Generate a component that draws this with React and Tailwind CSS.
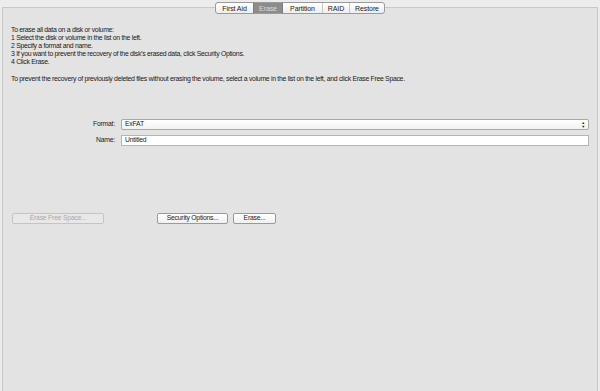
import React from 'react';

const tabs = ['First Aid', 'Erase', 'Partition', 'RAID', 'Restore'];

const MacButton = ({ children, disabled, className = '' }) => (
  <button
    className={`h-[11px] flex items-center justify-center rounded-[2px] border text-[6.8px] tracking-[-0.2px] leading-none ${
      disabled
        ? 'border-[#c4c4c4] bg-[#e8e8e8] text-[#a8a8a8]'
        : 'border-[#9a9a9a] bg-gradient-to-b from-white to-[#f0f0f0] text-[#222]'
    } ${className}`}
  >
    {children}
  </button>
);

export default function App() {
  return (
    <div
      className="w-[600px] h-[391px] bg-[#ececec] relative overflow-hidden text-[#1a1a1a]"
      style={{ fontFamily: '"Liberation Sans", Arial, sans-serif' }}
    >
      <div className="absolute left-[2px] right-[2px] top-[7px] bottom-0 border-t border-x border-[#c8c8c8] bg-[#e3e3e3]" />

      <div className="relative flex justify-center pt-[2px]">
        <div className="flex h-[12px] rounded-[3px] border border-[#9a9a9a] bg-gradient-to-b from-white to-[#eeeeee] overflow-hidden text-[7px] tracking-[-0.1px]">
          {tabs.map((t, i) => (
            <div
              key={t}
              className={`flex items-center justify-center leading-none ${
                i > 2 ? 'border-l border-[#c8c8c8]' : ''
              } ${
                t === 'Erase'
                  ? 'bg-[#8c8c8c] text-[#dcdcdc] border-x border-[#7a7a7a] w-[30px]'
                  : t === 'First Aid'
                  ? 'w-[37px]'
                  : t === 'Partition'
                  ? 'w-[39px]'
                  : t === 'RAID'
                  ? 'w-[27px]'
                  : 'w-[35px]'
              }`}
            >
              {t}
            </div>
          ))}
        </div>
      </div>

      <div className="relative px-[11px] pt-[12px] text-[6.9px] tracking-[-0.3px] leading-[8px]">
        <p>To erase all data on a disk or volume:</p>
        <p>1 Select the disk or volume in the list on the left.</p>
        <p>2 Specify a format and name.</p>
        <p>3 If you want to prevent the recovery of the disk’s erased data, click Security Options.</p>
        <p>4 Click Erase.</p>
        <p className="mt-[9px]">
          To prevent the recovery of previously deleted files without erasing the volume, select a volume in the list on the left, and click Erase Free Space.
        </p>
      </div>

      <div className="relative mt-[36px] flex flex-col gap-[5px] pl-[78px] pr-[11px] text-[6.8px] tracking-[-0.2px]">
        <div className="flex items-center">
          <span className="w-[43px] text-right pr-[6px]">Format:</span>
          <div className="flex-1 h-[11px] flex items-center justify-between rounded-[2px] border border-[#a8a8a8] bg-gradient-to-b from-white to-[#f2f2f2] pl-[3px] pr-[3px]">
            <span>ExFAT</span>
            <span className="flex flex-col items-center leading-none text-[4px] text-[#333]">
              <span>▲</span>
              <span>▼</span>
            </span>
          </div>
        </div>
        <div className="flex items-center">
          <span className="w-[43px] text-right pr-[6px]">Name:</span>
          <div className="flex-1 h-[11px] flex items-center border border-[#b4b4b4] bg-white pl-[3px]">
            Untitled
          </div>
        </div>
      </div>

      <div className="relative mt-[67px] flex items-center pl-[12px]">
        <MacButton disabled className="w-[92px]">Erase Free Space...</MacButton>
        <MacButton className="w-[71px] ml-[53px]">Security Options...</MacButton>
        <MacButton className="w-[43px] ml-[5px]">Erase...</MacButton>
      </div>
    </div>
  );
}
